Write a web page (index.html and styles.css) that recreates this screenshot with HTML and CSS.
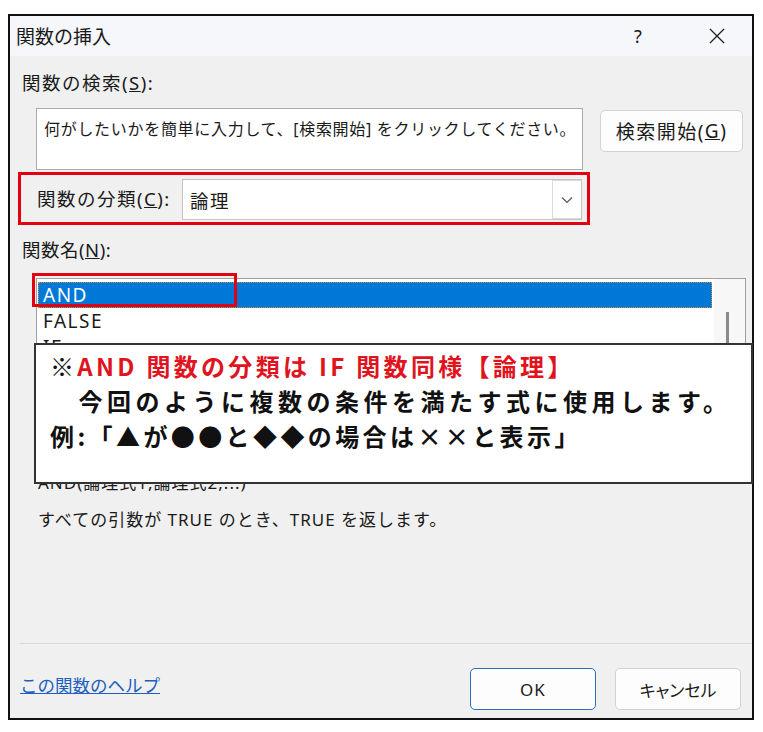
FILE: index.html
```html
<!DOCTYPE html>
<html lang="ja">
<head>
<meta charset="utf-8">
<title>関数の挿入</title>
<link rel="stylesheet" href="styles.css">
</head>
<body>
<div class="frame">
  <div class="titlebar">
    <span class="title">関数の挿入</span>
    <span class="help">?</span>
    <span class="close"><svg width="16" height="16" viewBox="0 0 16 16"><path d="M1 1 L15 15 M15 1 L1 15" stroke="#222" stroke-width="1.3" fill="none"/></svg></span>
  </div>
  <div class="content">
    <div class="label search-label">関数の検索(<u>S</u>):</div>
    <div class="search-row">
      <div class="search-box">何がしたいかを簡単に入力して、[検索開始] をクリックしてください。</div>
      <div class="btn search-btn">検索開始(<u>G</u>)</div>
    </div>
    <div class="category">
      <span class="label cat-label">関数の分類(<u>C</u>):</span>
      <div class="select">
        <span class="select-text">論理</span>
        <span class="arrow"><svg width="12" height="8" viewBox="0 0 12 8"><path d="M1 1.5 L6 6.5 L11 1.5" stroke="#555" stroke-width="1.2" fill="none"/></svg></span>
      </div>
    </div>
    <div class="label names-label">関数名(<u>N</u>):</div>
    <div class="list">
      <div class="rows">
        <div class="row sel">AND</div>
        <div class="row">FALSE</div>
        <div class="row">IF</div>
      </div>
      <div class="scroll"><div class="thumb"></div></div>
      <div class="mark-and"></div>
    </div>
    <div class="desc">
      <div class="syntax">AND(論理式1,論理式2,...)</div>
      <div class="summary">すべての引数が TRUE のとき、TRUE を返します。</div>
    </div>
  </div>
  <div class="footer">
    <span class="link">この関数のヘルプ</span>
    <div class="buttons">
      <div class="btn ok">OK</div>
      <div class="btn cancel">キャンセル</div>
    </div>
  </div>
  <div class="note">
    <div class="n1"><span class="k">※</span><span class="red">AND 関数の分類は IF 関数同様【論理】</span></div>
    <div class="n2">　今回のように複数の条件を満たす式に使用します。</div>
    <div class="n3">例:「▲が●●と◆◆の場合は××と表示」</div>
  </div>
</div>
</body>
</html>
```
FILE: styles.css
```css
* { box-sizing: border-box; }
body {
  margin: 0;
  background: #ffffff;
  font-family: "Noto Sans", "Noto Sans CJK JP", sans-serif;
  color: #1a1a1a;
}
.frame {
  position: relative;
  margin: 14px 0 0 8px;
  width: 746px;
  height: 706px;
  border: 2px solid #111;
  background: #f0f0f0;
  display: flex;
  flex-direction: column;
}
.titlebar {
  height: 40px;
  background: #f5f7fa;
  display: flex;
  align-items: center;
  padding-right: 19px;
}
.title {
  flex: 1;
  padding-left: 6px;
  font-size: 19px;
}
.help {
  width: 20px;
  text-align: center;
  font-size: 18px;
}
.close {
  width: 32px;
  margin-left: 53px;
  display: flex;
  justify-content: center;
}
.content {
  flex: 1;
  display: flex;
  flex-direction: column;
  align-items: flex-start;
}
.label {
  font-size: 18.5px;
  letter-spacing: 1.5px;
  line-height: 24px;
}
.search-label {
  margin-top: 15px;
  padding-left: 12px;
}
.search-row {
  margin-top: 13px;
  display: flex;
  align-items: flex-start;
}
.search-box {
  margin-left: 26px;
  width: 547px;
  height: 62px;
  background: #fff;
  border: 1px solid #ababab;
  padding: 8px 0 0 7px;
  font-size: 16px;
  letter-spacing: 0.7px;
  line-height: 24px;
  white-space: nowrap;
  overflow: hidden;
}
.btn {
  display: flex;
  align-items: center;
  justify-content: center;
  background: #fdfdfd;
  border: 1px solid #d2d2d2;
  border-radius: 5px;
  font-size: 17px;
}
.search-btn {
  margin-left: 17px;
  margin-top: 2px;
  width: 143px;
  height: 42px;
  font-size: 19px;
  letter-spacing: 1.5px;
}
.category {
  margin-top: 2px;
  margin-left: 8px;
  width: 572px;
  height: 53px;
  border: 3px solid #e3000f;
  display: flex;
  align-items: center;
}
.cat-label {
  padding-left: 16px;
}
.select {
  margin-left: auto;
  margin-right: 5px;
  align-self: flex-start;
  margin-top: 4px;
  width: 400px;
  height: 41px;
  background: #fff;
  border: 1px solid #c4c4c4;
  display: flex;
  align-items: center;
}
.select-text {
  flex: 1;
  padding-left: 7px;
  font-size: 18.5px;
  letter-spacing: 1.5px;
}
.arrow {
  width: 29px;
  height: 39px;
  border: 1px solid #d9d9d9;
  border-right: none;
  display: flex;
  align-items: center;
  justify-content: center;
}
.names-label {
  margin-top: 13px;
  padding-left: 12px;
  letter-spacing: 0.5px;
}
.list {
  position: relative;
  margin-top: 16px;
  margin-left: 26px;
  width: 710px;
  height: 196px;
  background: #fff;
  border: 1px solid #a0a0a0;
  display: flex;
}
.rows {
  flex: 1;
  padding: 3px 2px 0 1px;
  overflow: hidden;
}
.row {
  height: 26px;
  line-height: 26px;
  padding-left: 5px;
  font-size: 19px;
  letter-spacing: 1.5px;
}
.row.sel {
  background: #0078d7;
  color: #fff;
  outline: 1px dotted #c98a3f;
  outline-offset: -1px;
}
.scroll {
  width: 31px;
  background: #f7f7f7;
}
.thumb {
  margin-top: 33px;
  margin-left: 12px;
  width: 3px;
  height: 120px;
  background: #8a8a8a;
}
.mark-and {
  position: absolute;
  left: -5px;
  top: -6px;
  width: 205px;
  height: 34px;
  border: 3px solid #e3000f;
}
.desc {
  margin-top: -6px;
  padding-left: 28px;
  font-size: 17px;
  letter-spacing: 1px;
}
.syntax {
  line-height: 30px;
}
.summary {
  margin-top: 7px;
  line-height: 30px;
}
.footer {
  height: 75px;
  margin: 0 0 0 10px;
  border-top: 1px solid #d9d9d9;
  display: flex;
  align-items: flex-start;
  padding: 24px 11px 0 0;
}
.link {
  margin-top: 4px;
  line-height: 26px;
  font-size: 17.5px;
  color: #1c5fc0;
  text-decoration: underline;
}
.buttons {
  margin-left: auto;
  display: flex;
  gap: 19px;
}
.buttons .btn {
  width: 126px;
  height: 42px;
}
.ok {
  border: 1.5px solid #2c6fb8 !important;
  letter-spacing: 1px;
}
.cancel {
  font-feature-settings: "palt";
}
.note {
  position: absolute;
  left: 24px;
  top: 327px;
  width: 719px;
  height: 141px;
  background: #fff;
  border: 2px solid #333;
  padding: 3px 0 0 14px;
  font-family: "Noto Sans CJK JP", sans-serif;
  font-weight: 700;
  font-size: 24px;
  line-height: 35px;
  color: #111;
  white-space: nowrap;
}
.red { color: #e0141e; }
.n1 { letter-spacing: 3.3px; }
.n2 { letter-spacing: 4.5px; }
.n3 { letter-spacing: 3.4px; }
```
